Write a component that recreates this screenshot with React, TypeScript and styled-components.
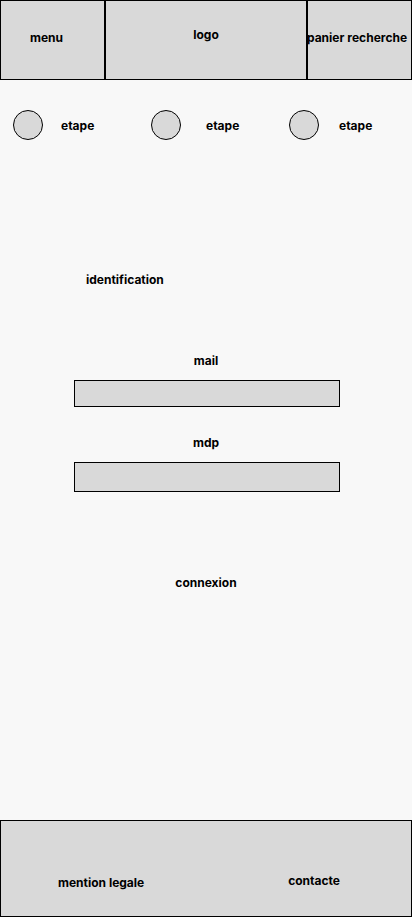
import React from "react";
import styled, { createGlobalStyle } from "styled-components";

const GlobalStyle = createGlobalStyle`
  *, *::before, *::after { box-sizing: border-box; }
  html, body { margin: 0; padding: 0; background: #f8f8f8; }
  body, button, input { font-family: Inter, sans-serif; font-size: 12px; line-height: 16px; font-weight: 700; color: #000; }
`;

const Page = styled.div`
  min-height: 100vh;
  display: flex;
  flex-direction: column;
`;

const Header = styled.header`
  display: grid;
  grid-template-columns: 105fr 202fr 105fr;
  height: 80px;
`;

const Cell = styled.div<{ $bottom?: number; $right?: number }>`
  display: flex;
  align-items: center;
  justify-content: center;
  min-width: 0;
  padding-bottom: ${(p) => p.$bottom ?? 4}px;
  padding-right: ${(p) => p.$right ?? 0}px;
  background: #d9d9d9;
  border: 1px solid #000;
`;

const PlainButton = styled.button`
  padding: 0;
  border: 0;
  background: none;
  white-space: nowrap;
  cursor: pointer;
`;

const TextLink = styled.a`
  color: inherit;
  text-decoration: none;
  white-space: nowrap;
`;

const CartActions = styled.div`
  display: flex;
  gap: 3px;
`;

const Steps = styled.ol`
  display: grid;
  grid-template-columns: repeat(3, 1fr);
  margin: 30px -15px 0 13px;
  padding: 0;
  list-style: none;
`;

const Step = styled.li<{ $gap: number }>`
  display: flex;
  align-items: center;
  gap: ${(p) => p.$gap}px;
`;

const StepName = styled.span`
  padding-top: 2px;
`;

const Dot = styled.span`
  width: 30px;
  height: 30px;
  border: 1px solid #000;
  border-radius: 50%;
  background: #d9d9d9;
`;

const Main = styled.main`
  flex: 1;
  display: flex;
  flex-direction: column;
  overflow-x: clip;
`;

const Form = styled.form`
  display: flex;
  flex-direction: column;
  align-items: center;
  width: 268px;
  margin: 132px auto 40px;
`;

const Title = styled.h1`
  align-self: flex-start;
  margin: 0 0 65px 14px;
  font-size: 12px;
  line-height: 16px;
`;

const FieldGroup = styled.div`
  display: flex;
  flex-direction: column;
  align-items: center;
  width: 100%;
  margin-bottom: 28px;
`;

const Label = styled.label`
  margin-bottom: 11px;
`;

const Field = styled.input<{ $height: number }>`
  align-self: flex-end;
  width: 266px;
  height: ${(p) => p.$height}px;
  padding: 0 8px;
  border: 1px solid #000;
  border-radius: 0;
  background: #d9d9d9;
`;

const Submit = styled(PlainButton)`
  margin-top: 55px;
`;

const Footer = styled.footer`
  display: flex;
  justify-content: space-between;
  align-items: flex-end;
  height: 97px;
  padding: 0 71px 25px 57px;
  background: #d9d9d9;
  border: 1px solid #000;
`;

const ContactLink = styled(TextLink)`
  padding-bottom: 2px;
`;

const steps = [
  { id: 1, gap: 18 },
  { id: 2, gap: 25 },
  { id: 3, gap: 20 },
];

export default function App() {
  return (
    <Page>
      <GlobalStyle />
      <Header>
        <Cell $right={12}>
          <PlainButton type="button">menu</PlainButton>
        </Cell>
        <Cell $bottom={10}>
          <TextLink href="#">logo</TextLink>
        </Cell>
        <Cell $right={5}>
          <CartActions>
            <TextLink href="#panier">panier</TextLink>
            <PlainButton type="button">recherche</PlainButton>
          </CartActions>
        </Cell>
      </Header>
      <Main>
        <Steps>
          {steps.map((step) => (
            <Step key={step.id} $gap={step.gap}>
              <Dot />
              <StepName>etape</StepName>
            </Step>
          ))}
        </Steps>
        <Form onSubmit={(e) => e.preventDefault()}>
          <Title>identification</Title>
          <FieldGroup>
            <Label htmlFor="mail">mail</Label>
            <Field id="mail" type="email" $height={27} />
          </FieldGroup>
          <FieldGroup>
            <Label htmlFor="mdp">mdp</Label>
            <Field id="mdp" type="password" $height={30} />
          </FieldGroup>
          <Submit type="submit">connexion</Submit>
        </Form>
      </Main>
      <Footer>
        <TextLink href="#mentions">mention legale</TextLink>
        <ContactLink href="#contact">contacte</ContactLink>
      </Footer>
    </Page>
  );
}
